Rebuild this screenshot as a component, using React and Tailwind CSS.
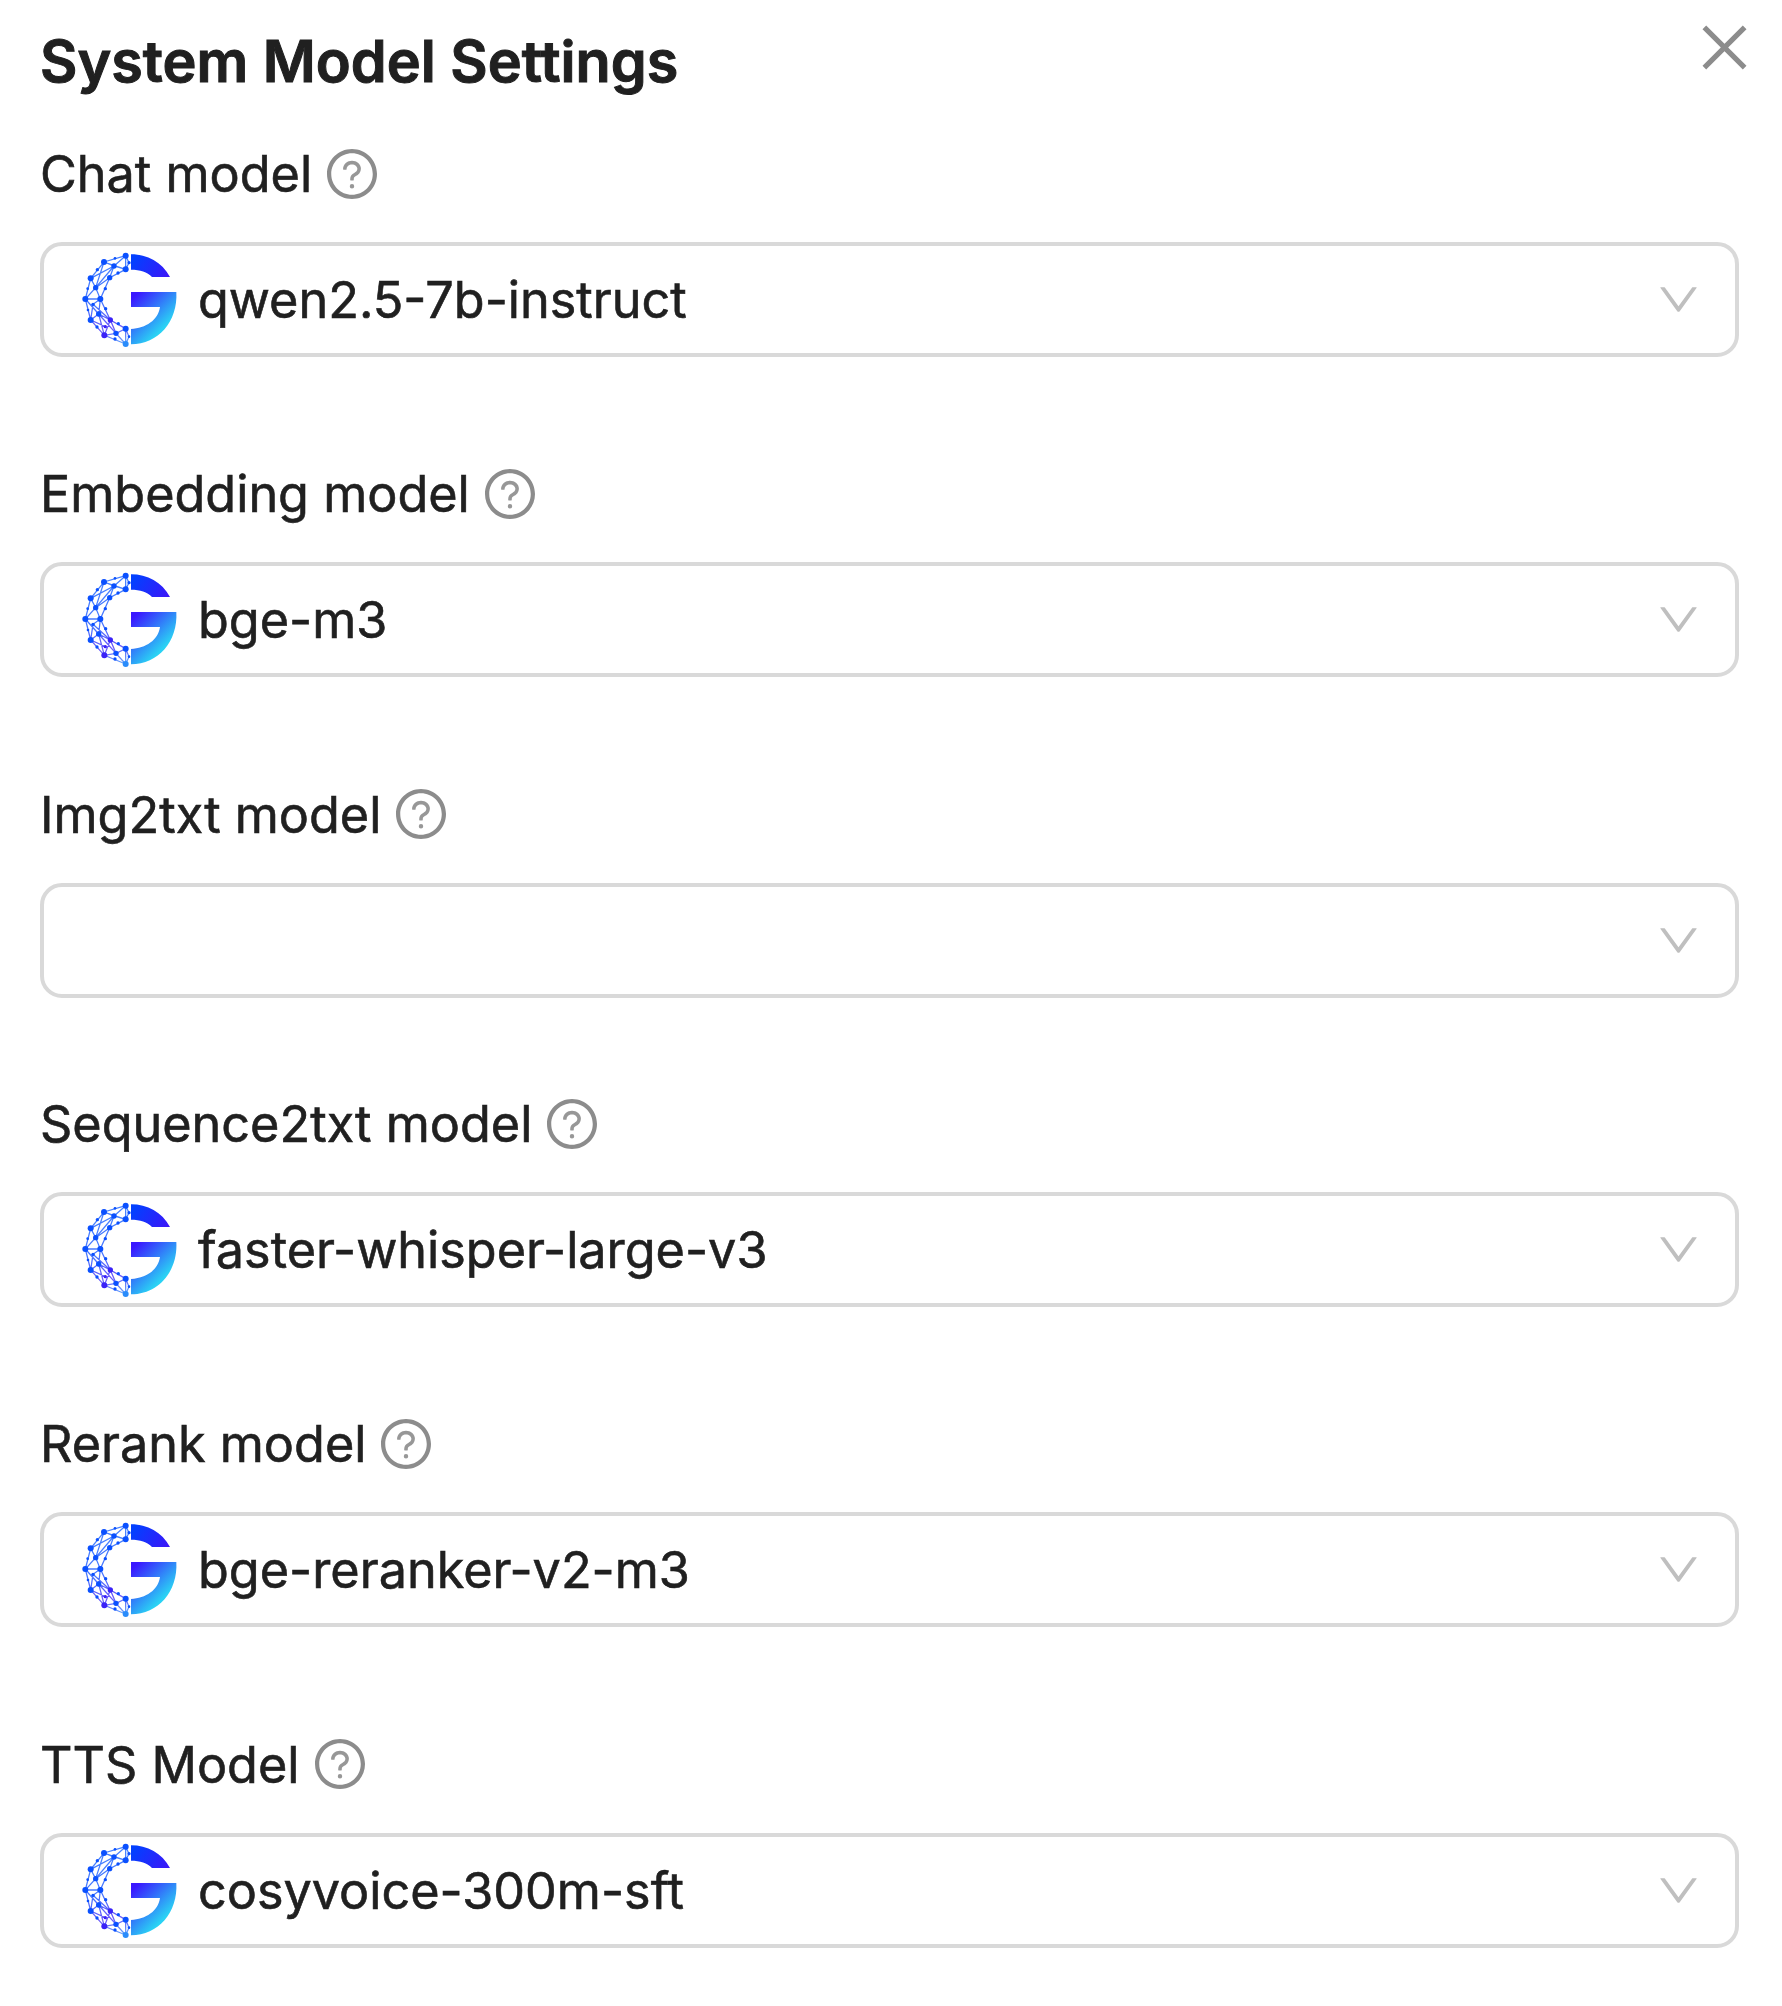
const FIELDS = [
  { label: "Chat model", value: "qwen2.5-7b-instruct" },
  { label: "Embedding model", value: "bge-m3" },
  { label: "Img2txt model", value: "" },
  { label: "Sequence2txt model", value: "faster-whisper-large-v3" },
  { label: "Rerank model", value: "bge-reranker-v2-m3" },
  { label: "TTS Model", value: "cosyvoice-300m-sft" },
];

const NODES = [
  [167, 47, 9], [102, 66, 9], [132, 78, 8], [167, 88, 9], [62, 115, 9], [119, 113, 8],
  [77, 143, 8], [46, 177, 9], [91, 177, 9], [62, 240, 9], [86, 222, 8], [121, 240, 8],
  [103, 286, 9], [138, 280, 8], [167, 266, 9], [167, 312, 9],
  [106, 146, 5], [69, 193, 5], [107, 206, 5], [82, 89, 5], [177, 68, 5], [81, 261, 5],
  [106, 260, 5], [135, 297, 5], [135, 55, 4], [53, 146, 4], [54, 210, 4], [145, 251, 5],
  [177, 290, 4], [144, 99, 5],
];

const MESH =
  "M167 47L102 66L62 115L46 177L62 240L103 286L167 312M167 47L132 78L102 66M132 78L167 88L119 113L91 177L121 240L167 266M132 78L62 115L77 143L46 177L91 177L77 143L132 78M119 113L77 143M102 66L77 143M167 47L177 68L167 88L167 47M167 88L102 66M119 113L132 78M62 240L86 222L46 177M86 222L91 177L69 193L62 240M69 193L121 240L86 222L103 286L138 280L167 266L167 312L138 280L121 240L103 286M86 222L138 280M62 240L106 260M167 266L177 290L167 312";

function Logo() {
  return (
    <svg viewBox="36 36 288 288" className="mt-px size-24 shrink-0">
      <defs>
        <linearGradient id="top" x1="190" y1="60" x2="285" y2="120" gradientUnits="userSpaceOnUse">
          <stop offset="0" stopColor="#0340ff" />
          <stop offset="1" stopColor="#3a18f8" />
        </linearGradient>
        <linearGradient id="bottom" x1="192" y1="170" x2="282" y2="262" gradientUnits="userSpaceOnUse">
          <stop offset="0" stopColor="#3a18ff" />
          <stop offset="1" stopColor="#2ad2f4" />
        </linearGradient>
        <linearGradient id="mesh" x1="100" y1="40" x2="150" y2="320" gradientUnits="userSpaceOnUse">
          <stop offset="0" stopColor="#0a5cff" />
          <stop offset="0.52" stopColor="#0a48ff" />
          <stop offset="0.78" stopColor="#3a22f8" />
          <stop offset="1" stopColor="#2a90fb" />
        </linearGradient>
      </defs>
      <path d={MESH} fill="none" stroke="url(#mesh)" strokeWidth="3.8" opacity="0.75" />
      {NODES.map(([x, y, r]) => (
        <circle
          key={x + "-" + y}
          cx={x}
          cy={y}
          r={r}
          fill={y > 300 ? "#2a8cfb" : y > 235 && x > 90 && x < 130 ? "#3a22f8" : "#0a50ff"}
        />
      ))}
      <path d="M183 43C232 43 276 66 300 111H246C232 96 210 89 183 89Z" fill="url(#top)" />
      <path d="M183 156H319C324 244 265 313 183 313V267C228 264 264 241 270 201H183Z" fill="url(#bottom)" />
    </svg>
  );
}

function HelpIcon() {
  return (
    <svg viewBox="64 64 896 896" fill="currentColor" className="size-[50px] shrink-0 text-[#8c8c8c]">
      <path d="M512 64C264.6 64 64 264.6 64 512s200.6 448 448 448 448-200.6 448-448S759.4 64 512 64zm0 820c-205.4 0-372-166.6-372-372s166.6-372 372-372 372 166.6 372 372-166.6 372-372 372z" />
      <path
        opacity="0.9"
        d="M623.6 316.7C593.6 290.4 554 276 512 276s-81.6 14.5-111.6 40.7C369.2 344 352 380.7 352 420v7.6c0 4.4 3.6 8 8 8h48c4.4 0 8-3.6 8-8V420c0-44.1 43.1-80 96-80s96 35.9 96 80c0 31.1-22 59.6-56.1 72.7-21.2 8.1-39.2 22.3-52.1 40.9-13.1 19-19.9 41.8-19.9 64.9V620c0 4.4 3.6 8 8 8h48c4.4 0 8-3.6 8-8v-22.7a48.3 48.3 0 0130.9-44.8c59-22.7 97.1-74.7 97.1-132.5.1-39.3-17.1-76-48.3-103.3zM472 732a40 40 0 1080 0 40 40 0 10-80 0z"
      />
    </svg>
  );
}

function DownIcon() {
  return (
    <svg viewBox="64 64 896 896" fill="currentColor" className="ml-auto size-[43px] shrink-0 text-[#bfbfbf]">
      <path d="M884 256h-75c-5.1 0-9.9 2.5-12.9 6.6L512 654.2 227.9 262.6c-3-4.1-7.8-6.6-12.9-6.6h-75c-6.5 0-10.3 7.4-6.5 12.7l352.6 486.1c12.8 17.6 39 17.6 51.7 0l352.6-486.1c3.9-5.3.1-12.7-6.4-12.7z" />
    </svg>
  );
}

function CloseIcon() {
  return (
    <svg viewBox="64 64 896 896" fill="currentColor" className="size-[57px]">
      <path d="M799.9 166.3L857.7 224.1 569.9 512 857.7 799.9 799.9 857.7 512 569.9 224.1 857.7 166.3 799.9 454.1 512 166.3 224.1 224.1 166.3 512 454.1z" />
    </svg>
  );
}

function Field({ label, value }) {
  return (
    <div className={value ? "h-[320.3px]" : "h-[309.5px]"}>
      <div className="flex h-[79px] items-center gap-[15px]">
        <label className="whitespace-nowrap">{label}</label>
        <HelpIcon />
      </div>
      <button className="mt-[29px] flex h-[115px] w-full items-center rounded-[22px] border-4 border-[#d9d9d9] pr-[35px] pl-[38px] text-left">
        {value && (
          <>
            <Logo />
            <span className="ml-[20px] whitespace-nowrap">{value}</span>
          </>
        )}
        <DownIcon />
      </button>
    </div>
  );
}

export default function App() {
  return (
    <main className="h-[2006px] w-[1782px] overflow-hidden bg-white pr-[43px] pl-[40px] font-['Inter',sans-serif] text-[50.35px] leading-[79px] text-[#202020] [-webkit-text-stroke:0.6px_#202020]">
      <header className="flex h-[134px] items-start justify-between">
        <h1 className="mt-[17px] text-[57.5px] leading-[88px] font-semibold [-webkit-text-stroke:1px_#202020]">
          System Model Settings
        </h1>
        <button aria-label="Close" className="mt-[19px] -mr-[14px] text-[#8c8c8c]">
          <CloseIcon />
        </button>
      </header>
      {FIELDS.map((f) => (
        <Field key={f.label} {...f} />
      ))}
    </main>
  );
}
